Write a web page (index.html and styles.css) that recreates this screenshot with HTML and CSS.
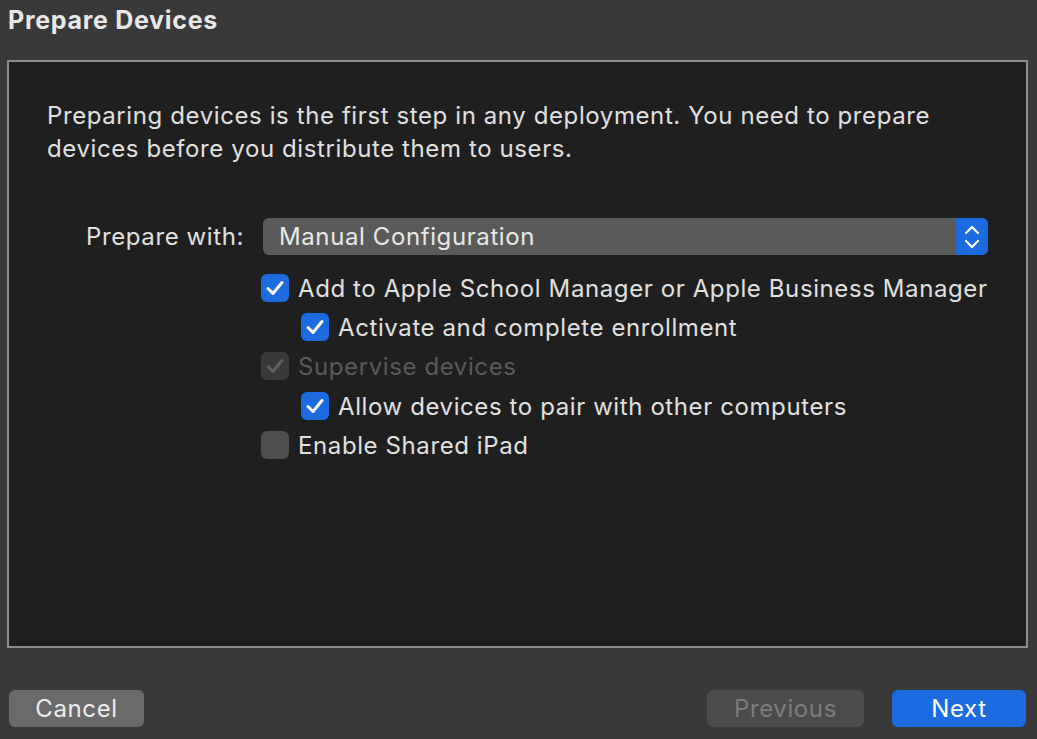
FILE: index.html
```html
<!DOCTYPE html>
<html>
<head>
<meta charset="utf-8">
<link rel="stylesheet" href="styles.css">
</head>
<body>
<div class="window">
  <h1 class="title">Prepare Devices</h1>
  <div class="panel">
    <p class="intro">Preparing devices is the first step in any deployment. You need to prepare devices before you distribute them to users.</p>
    <div class="form">
      <div class="form-label">Prepare with:</div>
      <div class="popup">
        <span class="popup-value">Manual Configuration</span>
        <span class="popup-arrows">
          <svg width="18" height="26" viewBox="0 0 18 26"><path d="M3 9 L9 3 L15 9 M3 17 L9 23 L15 17" fill="none" stroke="#fff" stroke-width="2.2" stroke-linecap="round" stroke-linejoin="round"/></svg>
        </span>
      </div>
      <div class="spacer"></div>
      <div class="options">
        <div class="option">
          <span class="box checked"><svg viewBox="0 0 28 28"><path d="M7 14.5 L12 19.5 L21 8.5" fill="none" stroke="#fff" stroke-width="3" stroke-linecap="round" stroke-linejoin="round"/></svg></span>
          <span class="opt-label">Add to Apple School Manager or Apple Business Manager</span>
        </div>
        <div class="option indent">
          <span class="box checked"><svg viewBox="0 0 28 28"><path d="M7 14.5 L12 19.5 L21 8.5" fill="none" stroke="#fff" stroke-width="3" stroke-linecap="round" stroke-linejoin="round"/></svg></span>
          <span class="opt-label">Activate and complete enrollment</span>
        </div>
        <div class="option disabled">
          <span class="box dis"><svg viewBox="0 0 28 28"><path d="M7 14.5 L12 19.5 L21 8.5" fill="none" stroke="#5e5e5e" stroke-width="3" stroke-linecap="round" stroke-linejoin="round"/></svg></span>
          <span class="opt-label">Supervise devices</span>
        </div>
        <div class="option indent">
          <span class="box checked"><svg viewBox="0 0 28 28"><path d="M7 14.5 L12 19.5 L21 8.5" fill="none" stroke="#fff" stroke-width="3" stroke-linecap="round" stroke-linejoin="round"/></svg></span>
          <span class="opt-label">Allow devices to pair with other computers</span>
        </div>
        <div class="option">
          <span class="box unchecked"></span>
          <span class="opt-label">Enable Shared iPad</span>
        </div>
      </div>
    </div>
  </div>
  <div class="footer">
    <button class="btn btn-cancel">Cancel</button>
    <div class="footer-right">
      <button class="btn btn-prev">Previous</button>
      <button class="btn btn-next">Next</button>
    </div>
  </div>
</div>
</body>
</html>
```
FILE: styles.css
```css
html, body {
  margin: 0;
  padding: 0;
  background: #393939;
}
body {
  font-family: Inter, "Noto Sans", "Liberation Sans", sans-serif;
  color: #dedede;
  width: 1037px;
  height: 739px;
  overflow: hidden;
  letter-spacing: 0.6px;
}
.window {
  display: flex;
  flex-direction: column;
  height: 739px;
}
.title {
  margin: 0;
  height: 60px;
  box-sizing: border-box;
  padding: 5px 0 0 8px;
  font-size: 25px;
  font-weight: 700;
  color: #e8e8e8;
  line-height: 30px;
  letter-spacing: 0.7px;
}
.panel {
  margin: 0 9px 0 7px;
  height: 588px;
  box-sizing: border-box;
  border: 2px solid #8b8b8b;
  background: #1f1f1f;
  padding: 37px 39px 0 38px;
}
.intro {
  margin: 0;
  font-size: 24px;
  line-height: 33px;
  color: #e0e0e0;
}
.form {
  margin-top: 53px;
  display: grid;
  grid-template-columns: 197px 1fr;
  column-gap: 19px;
  row-gap: 13px;
  align-items: center;
}
.form-label {
  text-align: right;
  font-size: 24px;
  color: #e0e0e0;
}
.popup {
  height: 37px;
  display: flex;
  align-items: stretch;
  border-radius: 6px;
  overflow: hidden;
  background: #5a5a5a;
}
.popup-value {
  flex: 1;
  font-size: 24px;
  line-height: 38px;
  padding-left: 16px;
  color: #e8e8e8;
}
.popup-arrows {
  width: 32px;
  background: #1c6be0;
  display: flex;
  align-items: center;
  justify-content: center;
}
.options {
  margin-left: -2px;
  display: flex;
  flex-direction: column;
}
.option {
  height: 39.4px;
  display: flex;
  align-items: center;
  gap: 9px;
}
.option.indent {
  padding-left: 40px;
}
.box {
  width: 28px;
  height: 28px;
  border-radius: 6px;
  box-sizing: border-box;
  display: flex;
  flex: none;
}
.box svg {
  width: 28px;
  height: 28px;
}
.box.checked {
  background: #1c6be0;
}
.box.dis {
  background: #393939;
}
.box.unchecked {
  background: #4e4e4e;
}
.opt-label {
  font-size: 24px;
  line-height: 30px;
  padding-top: 2px;
  color: #e0e0e0;
  white-space: nowrap;
}
.option.disabled .opt-label {
  color: #5a5a5a;
}
.footer {
  margin-top: 42px;
  display: flex;
  justify-content: space-between;
  padding: 0 11px 0 9px;
}
.footer-right {
  display: flex;
  gap: 28px;
}
.btn {
  height: 37px;
  border: none;
  border-radius: 6px;
  font-family: inherit;
  font-size: 24px;
  letter-spacing: 0.6px;
  padding: 0;
  line-height: 38px;
}
.btn-cancel {
  width: 135px;
  background: #6a6a6a;
  color: #ececec;
}
.btn-prev {
  width: 157px;
  background: #4b4b4b;
  color: #7d7d7d;
}
.btn-next {
  width: 134px;
  background: #1c6be0;
  color: #fff;
}
```
